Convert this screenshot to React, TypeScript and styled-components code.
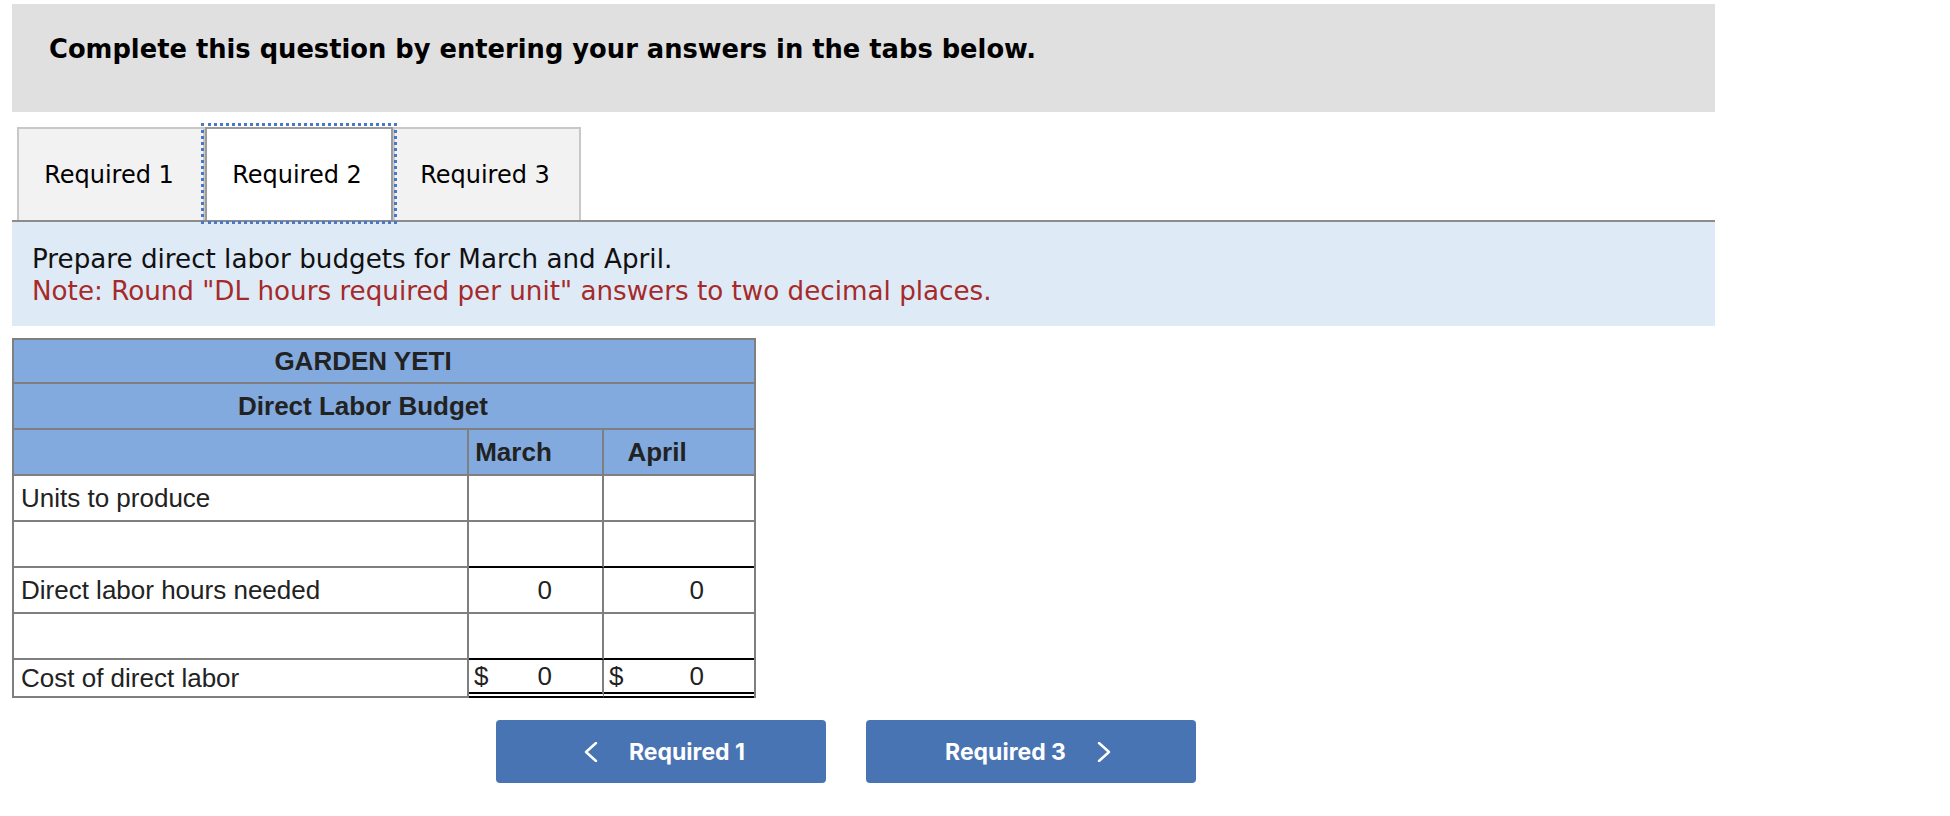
import React from 'react';
import styled, {createGlobalStyle} from 'styled-components';

type Rule = 'grey' | 'black' | 'double';

const GlobalStyle = createGlobalStyle`
  body {
    margin: 0;
    background: #fff;
  }
`;

const Page = styled.div`
  width: 1703px;
  padding: 4px 0 0 12px;
  font-family: "DejaVu Sans", Verdana, sans-serif;
`;

const Banner = styled.div`
  height: 108px;
  box-sizing: border-box;
  padding: 29px 0 0 37px;
  background: #e0e0e0;
  font-size: 25.75px;
  line-height: 32px;
  font-weight: bold;
  color: #000;
`;

const TabList = styled.div`
  display: flex;
  margin-top: 15px;
  padding-left: 5px;
  border-bottom: 2px solid #8c8c8c;
`;

const Tab = styled.button<{ $active?: boolean }>`
  position: relative;
  z-index: ${p => (p.$active ? 1 : 0)};
  width: 188px;
  height: 93px;
  box-sizing: border-box;
  padding: 0 4px 0 0;
  border: 2px solid ${p => (p.$active ? '#9c9c9c' : '#c8c8c8')};
  border-bottom: none;
  background: ${p => (p.$active ? '#fff' : '#f2f2f2')};
  font-family: "DejaVu Sans", Verdana, sans-serif;
  font-size: 24px;
  color: #000;
  outline: ${p => (p.$active ? '3px dotted #4a78c8' : 'none')};
  outline-offset: 1px;
  cursor: pointer;
`;

const Prompt = styled.div`
  padding: 21px 0 19px 20px;
  background: #dfeaf7;
  font-size: 26.2px;
  line-height: 32px;
  color: #111;
`;

const Note = styled.div`
  color: #a62a2a;
`;

const Budget = styled.div`
  margin-top: 12px;
  width: 744px;
  box-sizing: border-box;
  display: grid;
  grid-template-columns: 455px 135px 150px;
  grid-template-rows: 44px repeat(6, 46px) 38px;
  border: 2px solid #7f7f7f;
  border-bottom: none;
  font-family: "Liberation Sans", Arial, sans-serif;
  font-size: 26px;
  color: #222;
`;

const Title = styled.div`
  grid-column: 1 / -1;
  display: flex;
  align-items: center;
  justify-content: center;
  padding-right: 42px;
  background: #82aadf;
  border-bottom: 2px solid #7f7f7f;
  font-weight: bold;
`;

const ColHead = styled.div<{ $last?: boolean }>`
  display: flex;
  align-items: center;
  justify-content: center;
  box-sizing: border-box;
  padding-right: 44px;
  background: #82aadf;
  border-bottom: 2px solid #7f7f7f;
  border-right: ${p => (p.$last ? 'none' : '2px solid #7f7f7f')};
  font-weight: bold;
`;

const Label = styled.div`
  display: flex;
  align-items: center;
  padding-left: 7px;
  border-right: 2px solid #7f7f7f;
  border-bottom: 2px solid #7f7f7f;
`;

const Value = styled.div<{ $rule?: Rule; $last?: boolean }>`
  display: flex;
  align-items: center;
  padding: 0 50px 0 5px;
  border-right: ${p => (p.$last ? 'none' : '2px solid #7f7f7f')};
  border-bottom: ${p =>
    p.$rule === 'double' ? '6px double #000' : p.$rule === 'black' ? '2px solid #000' : '2px solid #7f7f7f'};
`;

const Amount = styled.span`
  margin-left: auto;
`;

const Nav = styled.div`
  display: flex;
  gap: 40px;
  margin: 22px 0 0 484px;
`;

const NavButton = styled.button<{ $dir: 'prev' | 'next' }>`
  width: 330px;
  height: 63px;
  box-sizing: border-box;
  display: flex;
  align-items: center;
  justify-content: center;
  gap: 31px;
  padding: ${p => (p.$dir === 'prev' ? '0 0 0 7px' : '0 6px 0 0')};
  border: none;
  border-radius: 4px;
  background: #4974b3;
  color: #fff;
  font-family: Inter, "Noto Sans", sans-serif;
  font-size: 23px;
  font-weight: 700;
  cursor: pointer;
`;

const Chevron = ({dir}: { dir: 'left' | 'right' }) => (
    <svg width="14" height="20" viewBox="0 0 14 20" fill="none">
        <polyline
            points={dir === 'left' ? '12,1 2,10 12,19' : '2,1 12,10 2,19'}
            stroke="#fff"
            strokeWidth="2.4"
            strokeLinecap="round"
            strokeLinejoin="round"
        />
    </svg>
);

const rows = [
    {label: 'Units to produce', march: '', april: '', rule: 'grey' as Rule},
    {label: '', march: '', april: '', rule: 'black' as Rule},
    {label: 'Direct labor hours needed', march: '0', april: '0', rule: 'grey' as Rule},
    {label: '', march: '', april: '', rule: 'black' as Rule},
];

export default function App() {
    return (
        <>
            <GlobalStyle/>
            <Page>
                <Banner>Complete this question by entering your answers in the tabs below.</Banner>

                <TabList>
                    <Tab>Required 1</Tab>
                    <Tab $active>Required 2</Tab>
                    <Tab>Required 3</Tab>
                </TabList>

                <Prompt>
                    <div>Prepare direct labor budgets for March and April.</div>
                    <Note>Note: Round "DL hours required per unit" answers to two decimal places.</Note>
                </Prompt>

                <Budget>
                    <Title>GARDEN YETI</Title>
                    <Title>Direct Labor Budget</Title>
                    <ColHead/>
                    <ColHead>March</ColHead>
                    <ColHead $last>April</ColHead>

                    {rows.map((r, i) => (
                        <React.Fragment key={i}>
                            <Label>{r.label}</Label>
                            <Value $rule={r.rule}><Amount>{r.march}</Amount></Value>
                            <Value $rule={r.rule} $last><Amount>{r.april}</Amount></Value>
                        </React.Fragment>
                    ))}

                    <Label>Cost of direct labor</Label>
                    <Value $rule="double"><span>$</span><Amount>0</Amount></Value>
                    <Value $rule="double" $last><span>$</span><Amount>0</Amount></Value>
                </Budget>

                <Nav>
                    <NavButton $dir="prev"><Chevron dir="left"/>Required 1</NavButton>
                    <NavButton $dir="next">Required 3<Chevron dir="right"/></NavButton>
                </Nav>
            </Page>
        </>
    );
}
